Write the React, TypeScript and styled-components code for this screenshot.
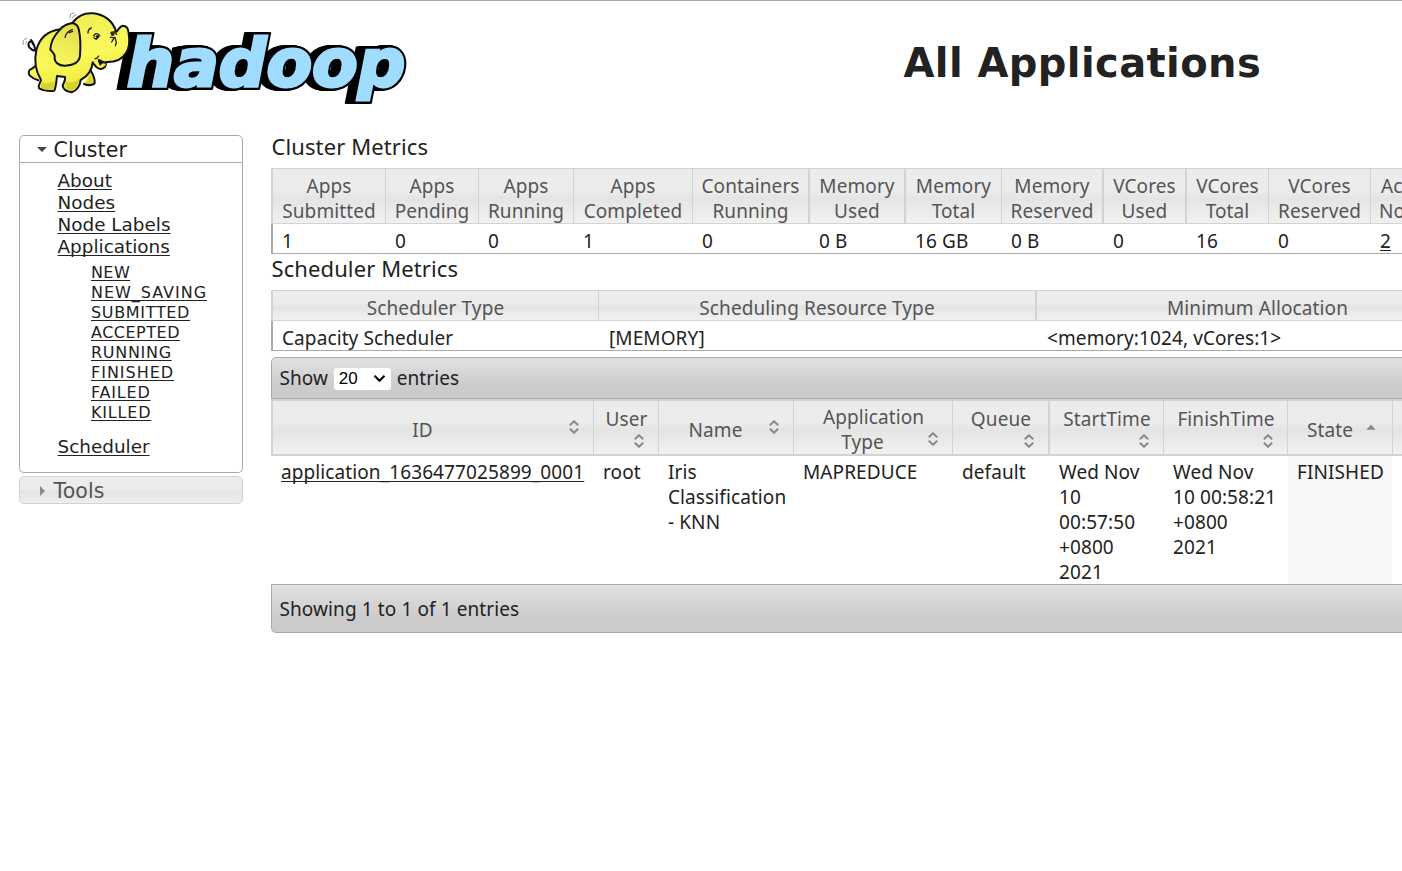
import React from "react";
import styled, { createGlobalStyle, css } from "styled-components";

const GlobalStyle = createGlobalStyle`
  * { box-sizing: border-box; }
  body {
    margin: 0;
    background: #fff;
    color: #222;
    font: 19px/25px "Noto Sans", "Noto Sans CJK SC", sans-serif;
    letter-spacing: 0.1px;
    overflow: hidden;
  }
`;

const Page = styled.div`
  height: 871px;
  border-top: 1px solid #aaa;
  overflow: hidden;
`;

const Header = styled.header`
  display: flex;
  height: 134px;
`;

const Logo = styled.svg`
  flex: none;
  width: 410px;
  height: 115px;
  margin-left: 10px;
`;

const Title = styled.h1`
  margin: 37px 0 0 483.5px;
  font: bold 40px/50px "DejaVu Sans", sans-serif;
  letter-spacing: 0.4px;
  white-space: nowrap;
`;

const Body = styled.div`
  display: flex;
  align-items: flex-start;
`;

const Sidebar = styled.nav`
  flex: none;
  width: 224px;
  margin-left: 19px;
  font-family: "DejaVu Sans", sans-serif;
  letter-spacing: 0;
`;

const SectionHeader = styled.div<{ $open?: boolean }>`
  display: flex;
  align-items: center;
  height: 28px;
  padding: 2px 0 0 16.5px;
  border: 1px solid ${(p) => (p.$open ? "#aaa" : "#d3d3d3")};
  border-radius: ${(p) => (p.$open ? "5px 5px 0 0" : "5px")};
  margin-top: ${(p) => (p.$open ? 0 : "3px")};
  background: ${(p) =>
    p.$open ? "#fff" : "linear-gradient(#ececec 0 45%, #e4e4e4 55%, #eee)"};
  color: ${(p) => (p.$open ? "#212121" : "#555")};
  font-size: 20.5px;
  line-height: 26px;
  letter-spacing: 0.1px;
`;

const Caret = styled.svg`
  width: 10px;
  height: 10px;
  margin-right: 7px;
`;

const SectionBody = styled.div`
  height: 310px;
  padding: 7px 0 0 37.5px;
  border: 1px solid #aaa;
  border-top: 0;
  border-radius: 0 0 5px 5px;
`;

const linkStyle = css`
  color: #222;
  text-decoration: underline;
  text-decoration-thickness: 1px;
  text-decoration-skip-ink: none;
`;

const NavLink = styled.a`
  ${linkStyle}
  display: block;
  width: max-content;
  font-size: 18.4px;
  line-height: 22px;
  text-underline-offset: 2px;
`;

const SubNav = styled.div`
  padding: 5px 0 13px 33.5px;
`;

const SubLink = styled(NavLink)<{ $tracking: number }>`
  font-size: 16px;
  line-height: 20px;
  letter-spacing: ${(p) => p.$tracking}px;
`;

const Main = styled.main`
  flex: none;
  width: 1600px;
  margin-left: 28px;
`;

const Heading = styled.div<{ $size: number; $line: number }>`
  height: ${(p) => p.$size}px;
  padding-left: 0.5px;
  font-size: 22px;
  line-height: ${(p) => p.$line}px;
`;

const headerFill = "linear-gradient(#ececec 0 42%, #e4e4e4 54%, #f1f1f1)";

const Table = styled.div<{ $cols: string; $head: number }>`
  display: grid;
  grid-template-columns: ${(p) => p.$cols};
  grid-template-rows: ${(p) => p.$head}px 29px;
  border-bottom: 1px solid #aaa;
`;

const HeadCell = styled.div<{ $wide?: boolean; $first?: boolean }>`
  padding: 5px 0 0;
  border: solid #d3d3d3;
  border-width: 1px ${(p) => (p.$wide ? "2px" : "1px")} 1px ${(p) => (p.$first ? "2px" : 0)};
  background: ${headerFill};
  color: #555;
  text-align: center;
  white-space: pre-line;
`;

const DataCell = styled.div<{ $first?: boolean; $inset?: number }>`
  padding: 5px 0 0 ${(p) => (p.$first ? 9 : p.$inset ?? 9)}px;
  border-left: ${(p) => (p.$first ? "2px solid #aaa" : 0)};
  line-height: 24px;
  white-space: nowrap;
`;

const Link = styled.a`
  ${linkStyle}
  text-underline-offset: 2px;
`;

const Bar = styled.div<{ $footer?: boolean }>`
  display: flex;
  align-items: center;
  height: ${(p) => (p.$footer ? "49px" : "42px")};
  margin-top: ${(p) => (p.$footer ? 0 : "6px")};
  padding: ${(p) => (p.$footer ? "2px" : 0)} 0 0 7.5px;
  border: 1px solid #aaa;
  border-radius: ${(p) => (p.$footer ? "0 0 0 5px" : "5px 0 0 0")};
  background: linear-gradient(#e2e2e2, #cbcbcb 70%, #cbcbcb);
`;

const Select = styled.div`
  display: flex;
  align-items: center;
  justify-content: space-between;
  width: 57px;
  height: 22px;
  margin: 1px 6px 0 5.5px;
  padding: 0 5px;
  border-radius: 3px;
  background: #fff;
  color: #000;
  font: 17px/22px "Liberation Sans", sans-serif;
`;

const AppGrid = styled.div`
  display: grid;
  grid-template-columns: 323px 65px 135px 159px 97px 114px 124px 105px 400px;
`;

const SortHead = styled.div<{ $wide?: boolean; $first?: boolean; $drop: number }>`
  display: flex;
  flex-direction: column;
  justify-content: center;
  height: 57px;
  padding-top: ${(p) => p.$drop}px;
  border: solid #d3d3d3;
  border-width: 2px ${(p) => (p.$wide ? "2px" : "1px")} 2px ${(p) => (p.$first ? "2px" : 0)};
  background: ${headerFill};
  color: #555;
`;

const HeadLine = styled.div<{ $h?: number }>`
  display: flex;
  flex: none;
  align-items: center;
  height: ${(p) => p.$h ?? 25}px;
`;

const HeadText = styled.span<{ $shift?: number }>`
  flex: 1;
  padding-left: ${(p) => p.$shift ?? 0}px;
  text-align: center;
`;

const SortGlyph = styled.svg<{ $lift?: number; $gap?: number }>`
  flex: none;
  width: 10px;
  height: 14px;
  margin: 0 ${(p) => p.$gap ?? 14}px ${(p) => p.$lift ?? 0}px auto;
`;

const AppCell = styled.div<{ $sorted?: boolean; $first?: boolean }>`
  height: 128px;
  margin-right: ${(p) => (p.$sorted ? "1px" : 0)};
  padding: 4px 0 0 ${(p) => (p.$first ? "10px" : "9px")};
  background: ${(p) => (p.$sorted ? "#f7f7f7" : "#fff")};
  white-space: pre;
`;

const clusterMetrics: { head: string; value: string; wide?: boolean; link?: boolean }[] = [
  { head: "Apps\nSubmitted", value: "1" },
  { head: "Apps\nPending", value: "0" },
  { head: "Apps\nRunning", value: "0" },
  { head: "Apps\nCompleted", value: "1" },
  { head: "Containers\nRunning", value: "0", wide: true },
  { head: "Memory\nUsed", value: "0 B", wide: true },
  { head: "Memory\nTotal", value: "16 GB" },
  { head: "Memory\nReserved", value: "0 B", wide: true },
  { head: "VCores\nUsed", value: "0", wide: true },
  { head: "VCores\nTotal", value: "16" },
  { head: "VCores\nReserved", value: "0" },
  { head: "Active\nNodes", value: "2", link: true },
];

const schedulerMetrics = [
  { head: "Scheduler Type", value: "Capacity Scheduler" },
  { head: "Scheduling Resource Type", value: "[MEMORY]", wide: true },
  { head: "Minimum Allocation", value: "<memory:1024, vCores:1>" },
];

const states: [string, number][] = [
  ["NEW", 0.4],
  ["NEW_SAVING", 0.97],
  ["SUBMITTED", 0.67],
  ["ACCEPTED", 0.5],
  ["RUNNING", 0.7],
  ["FINISHED", 0.98],
  ["FAILED", 0.8],
  ["KILLED", 0.8],
];

type Column = { label: string; second?: string; stacked?: boolean; wide?: boolean; ascending?: boolean };

const columns: Column[] = [
  { label: "ID" },
  { label: "User", stacked: true },
  { label: "Name" },
  { label: "Application", second: "Type" },
  { label: "Queue", stacked: true, wide: true },
  { label: "StartTime", stacked: true },
  { label: "FinishTime", stacked: true },
  { label: "State", ascending: true },
  { label: "" },
];

const application = [
  "application_1636477025899_0001",
  "root",
  "Iris\nClassification\n- KNN",
  "MAPREDUCE",
  "default",
  "Wed Nov\n10\n00:57:50\n+0800\n2021",
  "Wed Nov\n10 00:58:21\n+0800\n2021",
  "FINISHED",
  "",
];

function SortIcon({ lift, gap }: { lift?: number; gap?: number }) {
  return (
    <SortGlyph $lift={lift} $gap={gap} viewBox="0 0 10 14">
      <path d="M.8 5.3 5 1.2l4.2 4.1M.8 8.7 5 12.8l4.2-4.1" fill="none" stroke="#888" strokeWidth="1.9" />
    </SortGlyph>
  );
}

function ColumnHead({ column, first }: { column: Column; first: boolean }) {
  const { label, second, stacked, wide, ascending } = column;
  return (
    <SortHead $wide={wide} $first={first} $drop={stacked ? 0 : second ? 4 : 5}>
      {stacked && (
        <>
          <HeadLine $h={28}><HeadText $shift={1}>{label}</HeadText></HeadLine>
          <HeadLine $h={16}><SortIcon lift={2} /></HeadLine>
        </>
      )}
      {second && (
        <>
          <HeadLine><HeadText $shift={1}>{label}</HeadText></HeadLine>
          <HeadLine><HeadText $shift={3}>{second}</HeadText><SortIcon lift={6} /></HeadLine>
        </>
      )}
      {!stacked && !second && label && (
        <HeadLine>
          <HeadText $shift={ascending ? 6 : 3}>{label}</HeadText>
          {ascending ? (
            <SortGlyph $lift={7} $gap={16} viewBox="0 0 10 14">
              <path d="M.3 9.8 5 4.8l4.7 5z" fill="#888" />
            </SortGlyph>
          ) : (
            <SortIcon lift={6} />
          )}
        </HeadLine>
      )}
    </SortHead>
  );
}

function HadoopLogo() {
  const depth = [24, 21, 18, 15, 12, 9, 6, 3, 0];
  return (
    <Logo viewBox="0 3 1230 345">
      <defs>
        <linearGradient id="hide" x1="0.3" y1="0" x2="0.6" y2="1">
          <stop offset="0" stopColor="#efec55" />
          <stop offset="0.55" stopColor="#fbf95a" />
          <stop offset="1" stopColor="#e6e336" />
        </linearGradient>
        <linearGradient id="ear" x1="0.6" y1="0" x2="0.3" y2="1">
          <stop offset="0" stopColor="#dfdc4c" />
          <stop offset="1" stopColor="#fbf960" />
        </linearGradient>
        <text
          id="word"
          x="350"
          y="257"
          textLength="836"
          lengthAdjust="spacingAndGlyphs"
          fontFamily="DejaVu Sans"
          fontWeight="bold"
          fontStyle="oblique"
          fontSize="200"
          letterSpacing="0"
        >
          hadoop
        </text>
      </defs>
      {depth.map((d) => (
        <use key={d} href="#word" x={-d} fill="#000" stroke="#000" strokeWidth="22" strokeLinejoin="miter" />
      ))}
      <use href="#word" fill="#a0dcff" stroke="#a0dcff" strokeWidth="9" strokeLinejoin="miter" />
      <g stroke="#111" strokeWidth="6" strokeLinecap="round" strokeLinejoin="round" fill="url(#hide)">
        <path d="M76 152c-16-2-24-14-19-24 5-6 13-3 11 4M76 150c-3-12-4-22-13-30" fill="none" />
        <path d="M238 205c10 16 18 32 16 45-8 6-22 6-32 2" />
        <path d="M74 200c-4 3-6 6-10 7-8 2-10 12-5 19 8 8 16 13 26 15" />
        <path d="M188 68C204 46 226 38 250 40c34 4 60 24 68 55 8-2 8-16 20-18 12 0 17 8 18 22 3 22 4 44-8 60-12 20-34 28-60 27 2 14-6 20-16 21-12 0-18-12-24-20-2 24-16 42-36 53-2 18-12 32-27 37-12-2-26-8-27-20 2-9 10-15 7-26l-24-3c-2 16-3 34-8 44-14 2-34 0-46-7-4-9 3-15 6-25-18-30-20-62-14-90 10-36 36-58 73-62z" />
        <path d="M188 69c-18 3-32 10-40 22-14 14-26 36-27 58 6 7 13 12 13 20-2 18 12 29 32 28 22-1 42-6 44-30 2-26 2-54-4-80-2-8-10-16-18-18z" fill="url(#ear)" />
      </g>
      <path d="M263 177c8 0 13 6 24 8 1 8-2 13-8 17-9-3-15-12-16-25z" fill="#111" />
      <path d="M269 202c2-7 7-12 13-12l6 2c-3 7-10 11-19 10z" fill="#eee84a" />
      <path d="M94 246c12 6 28 4 40-2l-3 24c-14 2-28 0-38-5zM168 243c14 9 30 4 42-8l-10 26-15 12c-8-1-14-4-18-8z" fill="#c9c829" opacity=".7" />
      <path d="M240 222c6 8 10 18 10 27-8 3-16 3-22 1z" fill="#c9c829" opacity=".7" />
      <g fill="none" stroke="#222" strokeWidth="4" strokeLinecap="round">
        <path d="M255 176c6 0 9-4 11-8M303 97l11-2 6 8M301 112l12 1-8 13M315 112l4 16-3 9M234 99c0-8 4-13 10-15M251 107c5-8 14-8 18 1M165 112c3-13 12-20 22-23M178 98l10-4" />
      </g>
      <path d="m250 111 15-7 3 7-9 9c-4-1-8-4-9-9z" fill="#111" />
      <path d="m252 112 6-3 1 6z" fill="#fff" />
      <path d="m301 99 14-3-2 10-8 3z" fill="#222" />
      <g fill="none" stroke="#999" strokeWidth="3" strokeLinecap="round">
        <path d="M180 54l2-12 11-3M187 54l3-6 9-4M39 134l1-12 10-8M48 132l1-8" />
      </g>
    </Logo>
  );
}

export default function App() {
  return (
    <Page>
      <GlobalStyle />
      <Header>
        <HadoopLogo />
        <Title>All Applications</Title>
      </Header>
      <Body>
        <Sidebar>
          <SectionHeader $open>
            <Caret viewBox="0 0 10 10"><path d="M0 2h10L5 7z" fill="#454545" /></Caret>
            Cluster
          </SectionHeader>
          <SectionBody>
            <NavLink>About</NavLink>
            <NavLink>Nodes</NavLink>
            <NavLink>Node Labels</NavLink>
            <NavLink>Applications</NavLink>
            <SubNav>
              {states.map(([name, tracking]) => <SubLink key={name} $tracking={tracking}>{name}</SubLink>)}
            </SubNav>
            <NavLink>Scheduler</NavLink>
          </SectionBody>
          <SectionHeader>
            <Caret viewBox="0 0 10 10"><path d="M3 0v10l5-5z" fill="#888" /></Caret>
            Tools
          </SectionHeader>
        </Sidebar>
        <Main>
          <Heading $size={33} $line={23}>Cluster Metrics</Heading>
          <Table $head={56} $cols="115px 93px 95px 119px 117px 96px 96px 102px 83px 82px 102px 75px">
            {clusterMetrics.map((m, i) => (
              <HeadCell key={m.head} $wide={m.wide} $first={i === 0}>{m.head}</HeadCell>
            ))}
            {clusterMetrics.map((m, i) => (
              <DataCell key={m.head} $first={i === 0}>{m.link ? <Link>{m.value}</Link> : m.value}</DataCell>
            ))}
          </Table>
          <Heading $size={36} $line={28}>Scheduler Metrics</Heading>
          <Table $head={31} $cols="328px 438px 442px">
            {schedulerMetrics.map((m, i) => (
              <HeadCell key={m.head} $wide={m.wide} $first={i === 0}>{m.head}</HeadCell>
            ))}
            {schedulerMetrics.map((m, i) => (
              <DataCell key={m.head} $first={i === 0} $inset={10}>{m.value}</DataCell>
            ))}
          </Table>
          <Bar>
            Show
            <Select>
              20
              <svg width="13" height="9" viewBox="0 0 13 9">
                <path d="m1.5 1.8 5 5 5-5" fill="none" stroke="#000" strokeWidth="2" />
              </svg>
            </Select>
            entries
          </Bar>
          <AppGrid>
            {columns.map((c, i) => <ColumnHead key={c.label} column={c} first={i === 0} />)}
            {application.map((v, i) => (
              <AppCell key={i} $first={i === 0} $sorted={i === 7}>{i === 0 ? <Link>{v}</Link> : v}</AppCell>
            ))}
          </AppGrid>
          <Bar $footer>Showing 1 to 1 of 1 entries</Bar>
        </Main>
      </Body>
    </Page>
  );
}
